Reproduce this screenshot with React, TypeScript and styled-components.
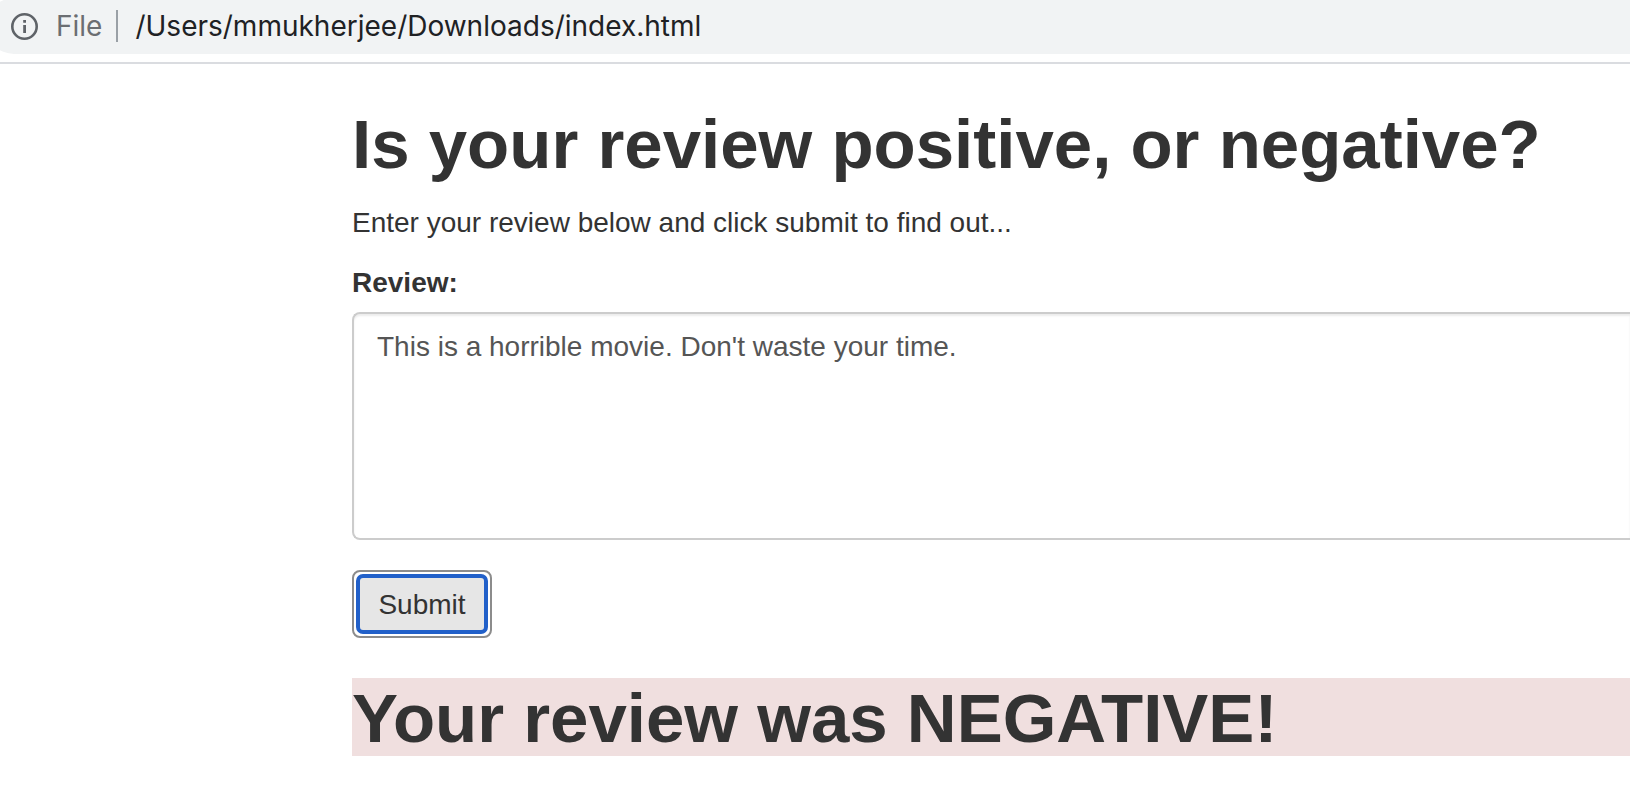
import React, { useState } from "react";
import styled, { createGlobalStyle } from "styled-components";

const GlobalStyle = createGlobalStyle`
  *, *::before, *::after { box-sizing: border-box; }
  body {
    margin: 0;
    overflow-x: hidden;
    background: #fff;
    color: #333;
    font-family: "Helvetica Neue", "Liberation Sans", Arial, sans-serif;
    font-size: 28px;
    line-height: 40px;
  }
`;

const Toolbar = styled.header`
  padding-bottom: 8px;
  border-bottom: 2px solid #dadce0;
  overflow: hidden;
`;

const AddressBar = styled.div`
  display: flex;
  align-items: center;
  height: 56px;
  margin: -2px 0 0 -14px;
  padding-left: 24px;
  border-radius: 28px 0 0 28px;
  background: #f1f3f4;
  color: #202124;
  font-family: Inter, Roboto, sans-serif;
  font-size: 28px;
  white-space: nowrap;
`;

const Scheme = styled.span`
  margin-left: 17px;
  padding-right: 14px;
  border-right: 2px solid #9aa0a6;
  color: #6b6e72;
  line-height: 32px;
`;

const Path = styled.span`
  margin-left: 17px;
`;

const Page = styled.main`
  padding: 40px 0 34px 352px;
`;

const Heading = styled.h1`
  margin: 0 0 17px;
  font-size: 69px;
  font-weight: 700;
  line-height: 82px;
  white-space: nowrap;
`;

const Intro = styled.p`
  margin: 0 0 20px;
`;

const Label = styled.label`
  display: block;
  margin-bottom: 9px;
  font-weight: 700;
`;

const ReviewBox = styled.textarea`
  display: block;
  width: 100%;
  height: 228px;
  margin-bottom: 30px;
  padding: 13px 24px 12px 23px;
  border: 2px solid #ccc;
  border-right: 0;
  border-radius: 8px 0 0 8px;
  outline: 0;
  resize: none;
  background: #fff;
  box-shadow: inset 0 2px 2px rgba(0, 0, 0, 0.075);
  color: #555;
  font: inherit;
`;

const SubmitButton = styled.button`
  display: flex;
  min-width: 140px;
  height: 68px;
  margin-bottom: 40px;
  padding: 2px;
  border: 2px solid #8c8c8c;
  border-radius: 8px;
  background: #fff;
  color: #333;
  font: inherit;
`;

const FocusRing = styled.span`
  flex: 1;
  align-self: stretch;
  padding: 7px 16px 5px;
  border: 4px solid #2160c9;
  border-radius: 7px;
  background: #e6e6e6;
`;

const Result = styled(Heading)`
  margin: 0;
  height: 78px;
  background: #f0dfdf;
`;

function InfoIcon() {
  return (
    <svg width="29" height="28" viewBox="0 0 29 28" aria-hidden="true">
      <circle cx="14.5" cy="14.5" r="12.2" fill="none" stroke="#5f6368" strokeWidth="2.6" />
      <path d="M13.2 8h2.8v2.7h-2.8zM13.2 13h2.8v8h-2.8z" fill="#5f6368" />
    </svg>
  );
}

export default function App() {
  const [review, setReview] = useState("This is a horrible movie. Don't waste your time.");

  return (
    <>
      <GlobalStyle />
      <Toolbar>
        <AddressBar>
          <InfoIcon />
          <Scheme>File</Scheme>
          <Path>/Users/mmukherjee/Downloads/index.html</Path>
        </AddressBar>
      </Toolbar>
      <Page>
        <Heading>Is your review positive, or negative?</Heading>
        <Intro>Enter your review below and click submit to find out...</Intro>
        <form onSubmit={(event) => event.preventDefault()}>
          <Label htmlFor="review">Review:</Label>
          <ReviewBox id="review" value={review} onChange={(event) => setReview(event.target.value)} />
          <SubmitButton type="submit">
            <FocusRing>Submit</FocusRing>
          </SubmitButton>
        </form>
        <Result>Your review was NEGATIVE!</Result>
      </Page>
    </>
  );
}
